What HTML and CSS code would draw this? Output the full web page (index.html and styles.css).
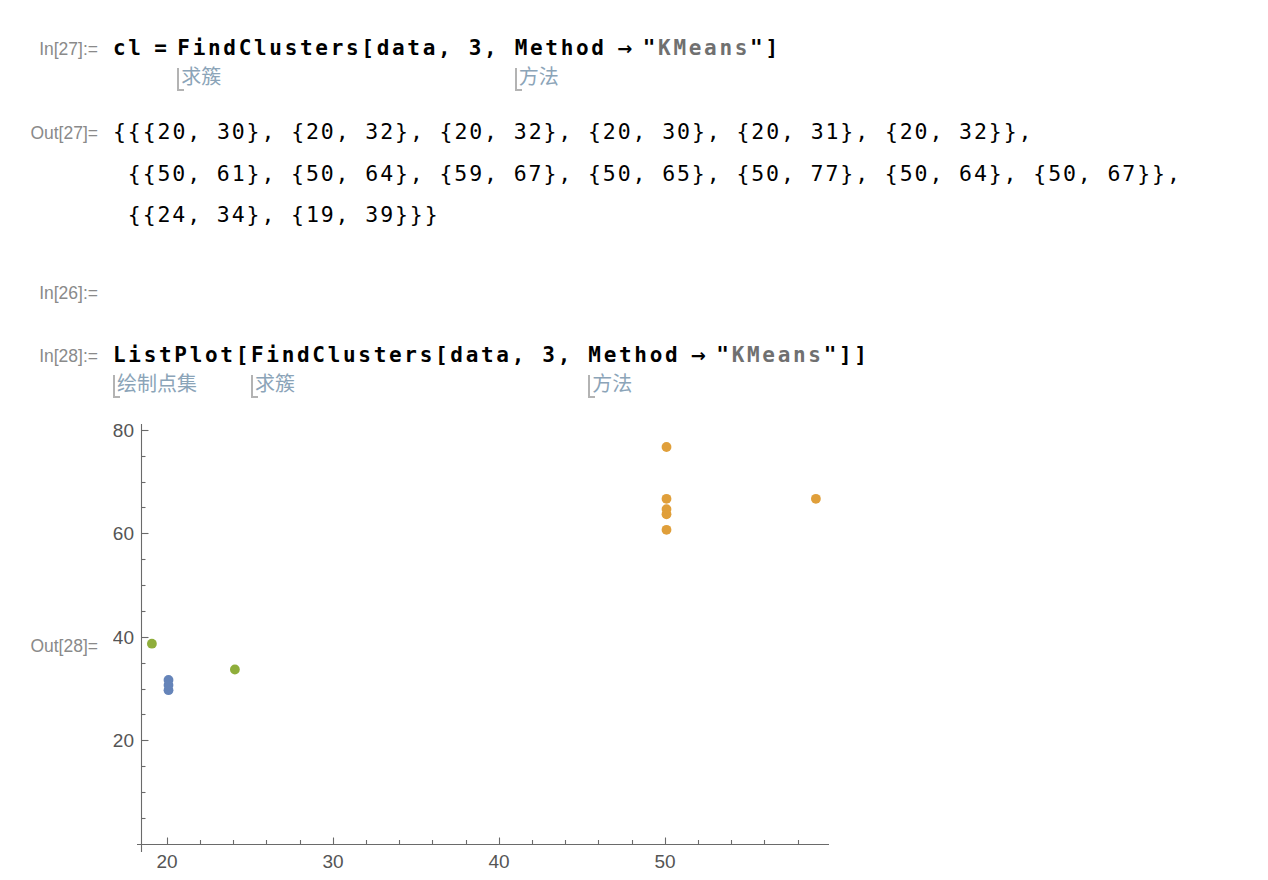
FILE: index.html
```html
<!DOCTYPE html>
<html lang="zh">
<head>
<meta charset="utf-8">
<title>FindClusters</title>
<link rel="stylesheet" href="styles.css">
</head>
<body>
<div class="notebook">

  <div class="cell in-cell first">
    <div class="lbl">In[27]:=</div>
    <div class="code">cl<span class="op">=</span><span class="tok"><span class="w">FindClusters</span><span class="note"><i class="brk"></i>求簇</span></span>[data, 3, <span class="tok"><span class="w">Method</span><span class="note"><i class="brk"></i>方法</span></span><span class="arr">→</span>"<span class="str">KMeans</span>"]</div>
  </div>

  <div class="cell out-cell">
    <div class="lbl">Out[27]=</div>
    <div class="out">
      <div class="oline">{{{20, 30}, {20, 32}, {20, 32}, {20, 30}, {20, 31}, {20, 32}},</div>
      <div class="oline ind">{{50, 61}, {50, 64}, {59, 67}, {50, 65}, {50, 77}, {50, 64}, {50, 67}},</div>
      <div class="oline ind">{{24, 34}, {19, 39}}}</div>
    </div>
  </div>

  <div class="cell in-cell empty">
    <div class="lbl">In[26]:=</div>
    <div class="code">&nbsp;</div>
  </div>

  <div class="cell in-cell second">
    <div class="lbl">In[28]:=</div>
    <div class="code"><span class="tok"><span class="w">ListPlot</span><span class="note"><i class="brk"></i>绘制点集</span></span>[<span class="tok"><span class="w">FindClusters</span><span class="note"><i class="brk"></i>求簇</span></span>[data, 3, <span class="tok"><span class="w">Method</span><span class="note"><i class="brk"></i>方法</span></span><span class="arr">→</span>"<span class="str">KMeans</span>"]]</div>
  </div>

  <div class="cell plot-cell">
    <div class="lbl plot-lbl">Out[28]=</div>
    <svg class="plot" width="740" height="465" viewBox="113 415 740 465" xmlns="http://www.w3.org/2000/svg">
      <g class="axes" stroke="#6a6a6a" stroke-width="1.1" fill="none">
        <line x1="141.5" y1="424" x2="141.5" y2="852"/>
        <line x1="137" y1="844.5" x2="829" y2="844.5"/>
        <line x1="141.5" y1="818.5" x2="145.5" y2="818.5"/>
        <line x1="141.5" y1="792.5" x2="145.5" y2="792.5"/>
        <line x1="141.5" y1="766.5" x2="145.5" y2="766.5"/>
        <line x1="141.5" y1="740.5" x2="148.5" y2="740.5"/>
        <line x1="141.5" y1="714.5" x2="145.5" y2="714.5"/>
        <line x1="141.5" y1="689.5" x2="145.5" y2="689.5"/>
        <line x1="141.5" y1="663.5" x2="145.5" y2="663.5"/>
        <line x1="141.5" y1="637.5" x2="148.5" y2="637.5"/>
        <line x1="141.5" y1="611.5" x2="145.5" y2="611.5"/>
        <line x1="141.5" y1="585.5" x2="145.5" y2="585.5"/>
        <line x1="141.5" y1="559.5" x2="145.5" y2="559.5"/>
        <line x1="141.5" y1="533.5" x2="148.5" y2="533.5"/>
        <line x1="141.5" y1="507.5" x2="145.5" y2="507.5"/>
        <line x1="141.5" y1="482.5" x2="145.5" y2="482.5"/>
        <line x1="141.5" y1="456.5" x2="145.5" y2="456.5"/>
        <line x1="141.5" y1="430.5" x2="148.5" y2="430.5"/>
        <line x1="167.5" y1="844.5" x2="167.5" y2="837.5"/>
        <line x1="200.5" y1="844.5" x2="200.5" y2="840"/>
        <line x1="233.5" y1="844.5" x2="233.5" y2="840"/>
        <line x1="266.5" y1="844.5" x2="266.5" y2="840"/>
        <line x1="300.5" y1="844.5" x2="300.5" y2="840"/>
        <line x1="333.5" y1="844.5" x2="333.5" y2="837.5"/>
        <line x1="366.5" y1="844.5" x2="366.5" y2="840"/>
        <line x1="399.5" y1="844.5" x2="399.5" y2="840"/>
        <line x1="432.5" y1="844.5" x2="432.5" y2="840"/>
        <line x1="466.5" y1="844.5" x2="466.5" y2="840"/>
        <line x1="499.5" y1="844.5" x2="499.5" y2="837.5"/>
        <line x1="532.5" y1="844.5" x2="532.5" y2="840"/>
        <line x1="565.5" y1="844.5" x2="565.5" y2="840"/>
        <line x1="598.5" y1="844.5" x2="598.5" y2="840"/>
        <line x1="632.5" y1="844.5" x2="632.5" y2="840"/>
        <line x1="665.5" y1="844.5" x2="665.5" y2="837.5"/>
        <line x1="698.5" y1="844.5" x2="698.5" y2="840"/>
        <line x1="731.5" y1="844.5" x2="731.5" y2="840"/>
        <line x1="764.5" y1="844.5" x2="764.5" y2="840"/>
        <line x1="798.5" y1="844.5" x2="798.5" y2="840"/>
      </g>
      <g class="ticklbl ylbl">
        <text x="134" y="436.5">80</text>
        <text x="134" y="540">60</text>
        <text x="134" y="643.5">40</text>
        <text x="134" y="747">20</text>
      </g>
      <g class="ticklbl xlbl">
        <text x="167" y="868">20</text>
        <text x="333" y="868">30</text>
        <text x="499" y="868">40</text>
        <text x="665" y="868">50</text>
      </g>
      <g fill="#6584b9">
        <circle cx="168.5" cy="690.2" r="4.9"/>
        <circle cx="168.5" cy="679.9" r="4.9"/>
        <circle cx="168.5" cy="685.1" r="4.9"/>
      </g>
      <g fill="#e09f3a">
        <circle cx="666.5" cy="529.8" r="4.9"/>
        <circle cx="666.5" cy="514.3" r="4.9"/>
        <circle cx="815.9" cy="498.8" r="4.9"/>
        <circle cx="666.5" cy="509.1" r="4.9"/>
        <circle cx="666.5" cy="447.0" r="4.9"/>
        <circle cx="666.5" cy="498.8" r="4.9"/>
      </g>
      <g fill="#8fae3b">
        <circle cx="234.9" cy="669.5" r="4.9"/>
        <circle cx="151.9" cy="643.7" r="4.9"/>
      </g>
    </svg>
  </div>

</div>
</body>
</html>
```

FILE: styles.css
```css
html, body {
  margin: 0;
  padding: 0;
  background: #ffffff;
}

.notebook {
  padding-top: 33px;
}

.cell {
  display: grid;
  grid-template-columns: 98px 1fr;
  column-gap: 15px;
  align-items: baseline;
}

.lbl {
  font-family: "Liberation Sans", Arial, sans-serif;
  font-size: 17.5px;
  color: #8a8a8a;
  text-align: right;
  white-space: nowrap;
}

.code {
  font-family: "DejaVu Sans Mono", monospace;
  font-weight: bold;
  font-size: 21px;
  line-height: 30px;
  letter-spacing: 2.69px;
  color: #000;
  white-space: nowrap;
}

.op {
  display: inline-block;
  width: 33.7px;
  text-align: center;
  letter-spacing: 0;
}

.arr {
  display: inline-block;
  width: 36px;
  text-align: center;
  letter-spacing: 0;
  font-family: "DejaVu Sans", sans-serif;
  font-size: 18px;
}

.str {
  color: #707070;
}

.tok {
  display: inline-flex;
  flex-direction: column;
  align-items: flex-start;
}

.note {
  display: flex;
  align-items: flex-start;
  margin-top: 2px;
  font-family: "Noto Sans CJK SC", "Noto Sans", sans-serif;
  font-weight: normal;
  font-size: 20px;
  line-height: 22px;
  letter-spacing: 0;
  color: #8ba4b8;
}

.brk {
  display: block;
  width: 5px;
  height: 21px;
  margin-top: 3px;
  margin-right: -3px;
  border-left: 2px solid #b3b3b3;
  border-bottom: 2px solid #b3b3b3;
  flex: none;
}

.out-cell {
  margin-top: 20px;
}

.out {
  font-family: "DejaVu Sans Mono", monospace;
  font-size: 21.5px;
  line-height: 41.5px;
  letter-spacing: 1.9px;
  color: #000;
  white-space: nowrap;
}

.oline.ind {
  padding-left: 14.8px;
}

.empty {
  margin-top: 41px;
}

.second {
  margin-top: 33px;
}

.plot-cell {
  margin-top: 17px;
  align-items: start;
}

.plot-lbl {
  padding-top: 221px;
  line-height: 20px;
}

.plot {
  display: block;
}

.ticklbl text {
  font-family: "Liberation Sans", Arial, sans-serif;
  font-size: 19px;
  fill: #555555;
}

.ylbl text {
  text-anchor: end;
}

.xlbl text {
  text-anchor: middle;
}
```
